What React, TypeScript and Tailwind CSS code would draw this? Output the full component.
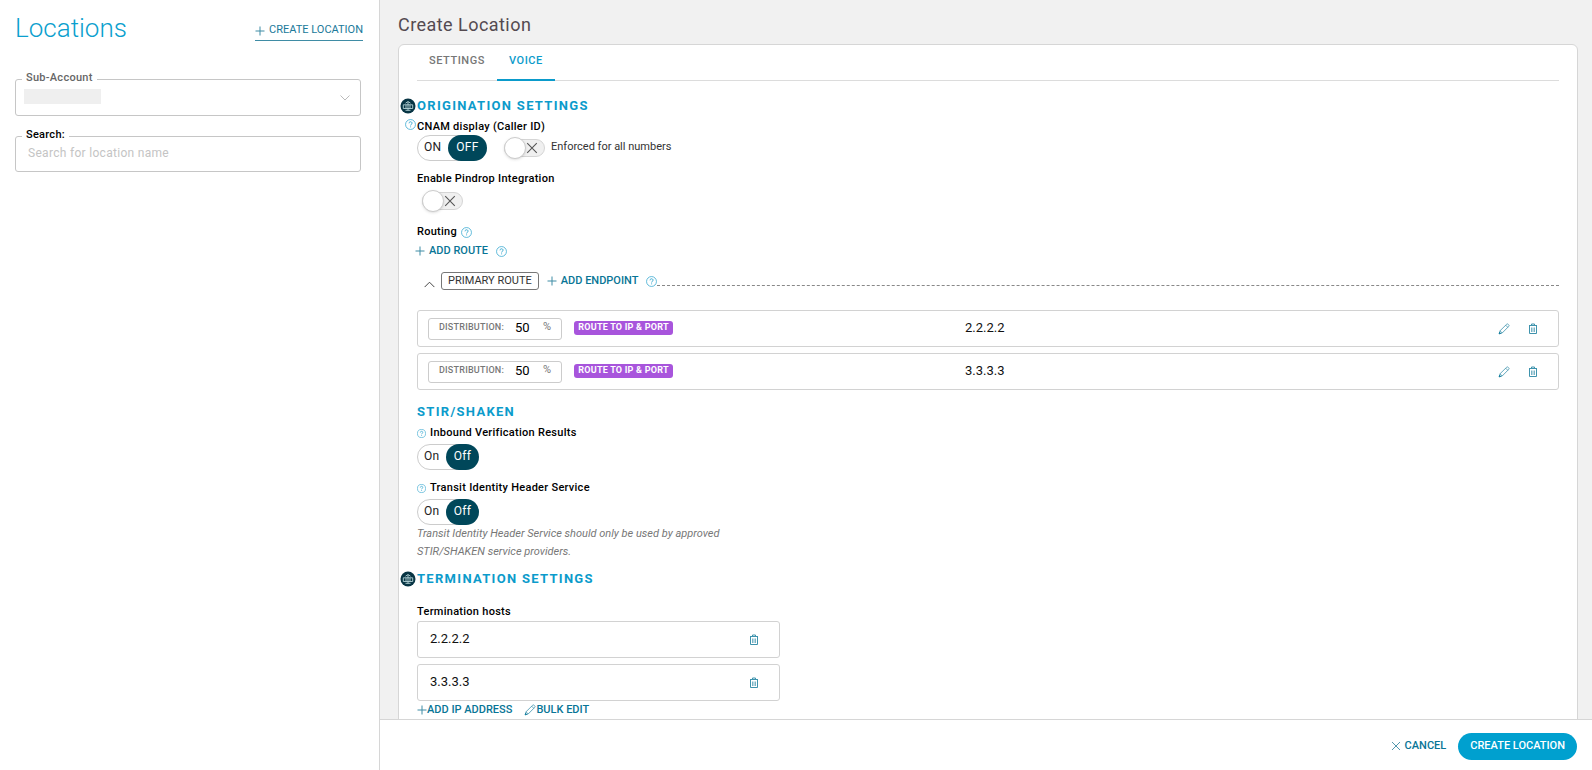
import type { ReactNode } from 'react'

function PlusIcon() {
  return (
    <svg viewBox="0 0 10 10" className="h-2.5 w-2.5 shrink-0" fill="none" stroke="#3f8ca5" strokeWidth="1">
      <path d="M5 .5v9M.5 5h9" />
    </svg>
  )
}

function CrossIcon({ className }: { className: string }) {
  return (
    <svg viewBox="0 0 10 10" className={className} fill="none" stroke="currentColor" strokeWidth=".9">
      <path d="M1 1l8 8M9 1L1 9" />
    </svg>
  )
}

function PencilIcon() {
  return (
    <svg viewBox="0 0 12 12" className="h-3 w-3 shrink-0" fill="none" stroke="#3f93ad" strokeWidth=".8">
      <path d="M1.2 10.8l.8-3L8.6 1.3c.5-.5 1.1-.5 1.6 0l.5.5c.5.5.5 1.1 0 1.600L4.200 10zM7.700 2.200l2.100 2.100M2 7.800L4.200 10" />
      <path d="M1.200 10.800l.4-1.500 1.100 1.100z" fill="#0b7a9b" stroke="#0b7a9b" />
    </svg>
  )
}

function TrashIcon() {
  return (
    <svg viewBox="0 0 10 12" className="h-3 w-2.5" fill="none" stroke="#3f93ad" strokeWidth="1">
      <path d="M1 2.500h8M3.500 2.500v-1.500h3v1.500M1.500 2.500v8h7v-8" />
      <path d="M3.500 4.500v4.500M5 4.500v4.500M6.500 4.500v4.500" strokeWidth=".7" />
    </svg>
  )
}

function HelpIcon({ className }: { className: string }) {
  return (
    <svg viewBox="0 0 12 12" className={className} fill="none" stroke="#2ba3cd" strokeWidth=".8">
      <circle cx="6" cy="6" r="5.400" />
      <path d="M4.400 4.700c0-2.200 3.300-2.200 3.300-.1 0 1.200-1.600 1.200-1.600 2.500M6.100 8.100v1" strokeWidth="1" />
    </svg>
  )
}

function GlobeBadge() {
  return (
    <svg viewBox="0 0 16 16" className="h-4 w-4 shrink-0">
      <circle cx="8" cy="8" r="7.500" fill="#083544" />
      <g fill="none" stroke="#b4d2d6" strokeWidth=".9">
        <path d="M8 4v8.500M3.300 6.800h9.400v3.700H3.300zM6 6.800v3.700M10 6.800v3.700" />
        <path d="M5.500 5.200L8 3.500l2.500 1.700M5.500 12.300h5" />
      </g>
    </svg>
  )
}

function SectionTitle({ children, badge, className }: { children: ReactNode; badge?: boolean; className: string }) {
  return (
    <h2 className={`${className} flex h-5 items-center text-[13px] font-bold tracking-widest text-[#0b9bcb] ${badge ? '-ml-[17px] gap-px' : ''}`}>
      {badge && <GlobeBadge />}
      {children}
    </h2>
  )
}

function OnOff({ name, on, off, small }: { name: string; on: string; off: string; small?: boolean }) {
  return (
    <div role="radiogroup" aria-label={name} className={`${small ? 'w-[62px]' : 'w-[70px]'} flex h-[26px] text-[12px] tracking-wide`}>
      <label className="relative -mr-4 flex flex-1 items-center rounded-l-full border border-[#ccc] pl-1.5 pb-0.5 text-[#222]">
        <input type="radio" name={name} className="sr-only" />
        {on}
      </label>
      <label className={`${small ? 'w-[33px]' : 'w-[39px]'} relative flex items-center justify-center rounded-full bg-[#00475a] pb-0.5 text-white`}>
        <input type="radio" name={name} defaultChecked className="sr-only" />
        {off}
      </label>
    </div>
  )
}

function Switch({ id }: { id: string }) {
  return (
    <label htmlFor={id} className="relative flex h-[22px] w-[41px] items-center text-[#555]">
      <input id={id} type="checkbox" aria-label={id} className="sr-only" />
      <span className="flex h-[18px] flex-1 items-center justify-end rounded-full border border-[#d5d5d5] bg-[#f0f0f0] pr-1.5">
        <CrossIcon className="h-3 w-3" />
      </span>
      <span className="absolute left-0 top-0 h-[22px] w-[22px] rounded-full border border-[#ccc] bg-white shadow-sm" />
    </label>
  )
}

function RouteRow({ ip, id }: { ip: string; id: string }) {
  return (
    <div className="grid h-[37px] grid-cols-[1fr_1fr] items-center rounded-[3px] border border-[#d2d2d2] pl-2.5 pr-5">
      <div className="flex items-center">
        <div className="flex h-[22px] w-[134px] items-center rounded-[3px] border border-[#ccc] pl-2.5 pb-0.5 text-[#777]">
          <label htmlFor={id} className="w-[76px] text-[9px] font-medium tracking-wide">DISTRIBUTION:</label>
          <input id={id} defaultValue="50" className="w-[28px] text-[13px] text-black outline-none" />
          <span className="text-[11px]">%</span>
        </div>
        <span className="mb-0.5 ml-3 flex h-3.5 w-[99px] items-center justify-center whitespace-nowrap rounded-[3px] bg-[#a855dc] text-[9px] font-bold tracking-wide text-white">
          ROUTE TO IP &amp; PORT
        </span>
      </div>
      <div className="flex items-center justify-between">
        <span className="-ml-[18px] pb-0.5 text-[13px] text-[#111]">{ip}</span>
        <div className="flex gap-[18px]">
          <button aria-label="Edit"><PencilIcon /></button>
          <button aria-label="Delete"><TrashIcon /></button>
        </div>
      </div>
    </div>
  )
}

function HostRow({ ip }: { ip: string }) {
  return (
    <div className="flex h-[37px] items-center justify-between rounded-[3px] border border-[#d2d2d2] pl-3 pr-5 text-[13px] text-[#111]">
      <span className="pb-0.5">{ip}</span>
      <button aria-label="Delete"><TrashIcon /></button>
    </div>
  )
}

const label = 'flex h-4 items-center text-[11px] font-medium tracking-wide text-black'
const link = 'flex h-4 items-center text-[11px] font-medium text-[#087596]'

export default function App() {
  return (
    <div className="flex h-screen overflow-hidden bg-white font-['Roboto',sans-serif]">
      <aside className="w-[380px] shrink-0 border-r border-[#d6d6d6] pl-[15px] pr-4 pt-3">
        <div className="flex h-8 items-center justify-between">
          <h1 className="text-[26px] font-light text-[#0b9fce]">Locations</h1>
          <button className="mt-1.5 flex h-5 items-center gap-1 border-b border-[#3f8ca5] text-[11px] text-[#20799a]">
            <PlusIcon />
            CREATE LOCATION
          </button>
        </div>
        <div className="relative mr-0.5 mt-[35px] h-[37px] rounded-[3px] border border-[#c6c6c6]">
          <label htmlFor="account" className="absolute -top-2.5 left-1.5 bg-white px-1 text-[11px] font-medium tracking-wide text-[#666]">Sub-Account</label>
          <select id="account" className="h-full w-full appearance-none outline-none">
            <option></option>
          </select>
          <span className="absolute left-2 top-[9px] h-[15px] w-[77px] bg-[#efefef]" />
          <svg viewBox="0 0 10 6" className="absolute right-2.5 top-[15px] h-1.5 w-2.5" fill="none" stroke="#bbb">
            <path d="M.5.5L5 5 9.500.500" />
          </svg>
        </div>
        <div className="relative mr-0.5 mt-5 h-9 rounded-[3px] border border-[#c6c6c6]">
          <label htmlFor="search" className="absolute -top-2.5 left-1.5 bg-white px-1 text-[11px] font-medium tracking-wide text-black">Search:</label>
          <input id="search" placeholder="Search for location name" className="h-full w-full px-3 pb-0.5 text-[12px] tracking-wide outline-none placeholder:text-[#c4c4c4]" />
        </div>
      </aside>

      <div className="flex min-w-0 flex-1 flex-col">
        <main className="flex min-h-0 flex-1 flex-col overflow-hidden bg-[#f1f1f1] pl-[18px] pr-3.5">
          <h1 className="flex h-11 shrink-0 items-center pt-1 text-[18px] tracking-wide text-[#544a50]">Create Location</h1>
          <div className="shrink-0 rounded-md border border-[#d6d6d6] bg-white px-[18px] pb-6">
            <nav className="flex h-9 border-b border-[#dcdcdc] pl-3 text-[11px] font-medium tracking-wider">
              <a href="#settings" className="mr-3 pt-2 text-[#777]">SETTINGS</a>
              <a href="#voice" className="-mb-px border-b-2 border-[#0b9bcb] px-3 pt-2 text-[#0b9bcb]">VOICE</a>
            </nav>

            <SectionTitle badge className="mt-[15px]">ORIGINATION SETTINGS</SectionTitle>
            <div className={`${label} -ml-3 mt-[3px]`}>
              <HelpIcon className="-mt-1.5 mr-px h-[11px] w-[11px]" />
              CNAM display (Caller ID)
            </div>
            <div className="flex items-center">
              <OnOff name="CNAM display" on="ON" off="OFF" />
              <div className="ml-[17px] flex items-center">
                <Switch id="enforced" />
                <label htmlFor="enforced" className="ml-1.5 pb-0.5 text-[11px] text-[#333]">Enforced for all numbers</label>
              </div>
            </div>
            <div className={`${label} mt-2.5`}>Enable Pindrop Integration</div>
            <div className="ml-[5px] mt-[3px]"><Switch id="pindrop" /></div>

            <div className={`${label} mt-3 gap-1`}>
              Routing
              <HelpIcon className="h-[11px] w-[11px]" />
            </div>
            <div className="mt-[3px] flex items-center gap-2">
              <button className={`${link} -ml-0.5 gap-1`}><PlusIcon />ADD ROUTE</button>
              <HelpIcon className="h-[11px] w-[11px]" />
            </div>

            <div className="mt-3 flex h-5 items-center">
              <button aria-label="Collapse" className="ml-[7px] mt-1.5">
                <svg viewBox="0 0 12 7" className="h-[7px] w-[11px]" fill="none" stroke="#333">
                  <path d="M.700 6.300L6 1l5.300 5.300" />
                </svg>
              </button>
              <span className="ml-1.5 flex h-[18px] items-center rounded-[3px] border border-[#777] px-1.5 text-[11px] text-[#333]">PRIMARY ROUTE</span>
              <button className={`${link} ml-2 mr-2 gap-1`}><PlusIcon />ADD ENDPOINT</button>
              <HelpIcon className="h-[11px] w-[11px] shrink-0" />
              <div className="mt-2 flex-1 border-t border-dashed border-[#888]" />
            </div>

            <div className="mt-[19px] flex flex-col gap-1.5">
              <RouteRow ip="2.2.2.2" id="dist-1" />
              <RouteRow ip="3.3.3.3" id="dist-2" />
            </div>

            <SectionTitle className="mt-3">STIR/SHAKEN</SectionTitle>
            <div className={`${label} mt-[3px] gap-1`}>
              <HelpIcon className="h-[9px] w-[9px]" />
              Inbound Verification Results
            </div>
            <div className="mt-[3px]"><OnOff name="Inbound" on="On" off="Off" small /></div>
            <div className={`${label} mt-2.5 gap-1`}>
              <HelpIcon className="h-[9px] w-[9px]" />
              Transit Identity Header Service
            </div>
            <div className="mt-[3px]"><OnOff name="Transit" on="On" off="Off" small /></div>
            <p className="max-w-[320px] text-[11px] italic leading-[18px] text-[#777]">
              Transit Identity Header Service should only be used by approved STIR/SHAKEN service providers.
            </p>

            <SectionTitle badge className="mt-2">TERMINATION SETTINGS</SectionTitle>
            <div className={`${label} mt-[15px]`}>Termination hosts</div>
            <div className="mt-px flex max-w-[363px] flex-col gap-1.5">
              <HostRow ip="2.2.2.2" />
              <HostRow ip="3.3.3.3" />
            </div>
            <div className="mt-px flex gap-3">
              <button className={link}><PlusIcon />ADD IP ADDRESS</button>
              <button className={link}><PencilIcon />BULK EDIT</button>
            </div>
          </div>
        </main>
        <footer className="flex h-[51px] shrink-0 items-center justify-end gap-3 border-t border-[#d6d6d6] bg-white pr-[15px] pt-0.5">
          <button className={`${link} gap-1`}>
            <CrossIcon className="h-2.5 w-2.5 text-[#3f8ca5]" />
            CANCEL
          </button>
          <button className="h-[27px] rounded-full bg-[#00a0cf] px-3 text-[11px] font-medium text-white">CREATE LOCATION</button>
        </footer>
      </div>
    </div>
  )
}
